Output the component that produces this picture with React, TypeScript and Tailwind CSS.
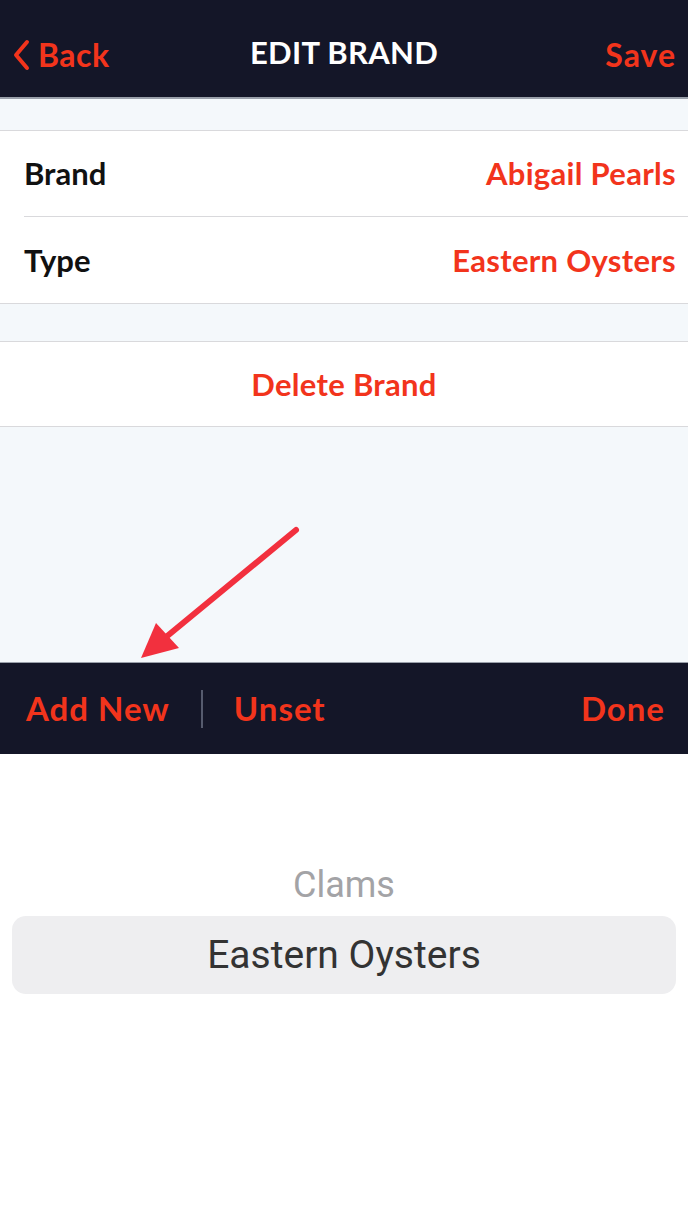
import React from 'react';

const red = 'text-[#f2341c]';

const Row: React.FC<{ label: string; value: string; divider?: boolean }> = ({ label, value, divider }) => (
  <div className="pl-6">
    <div className={`flex h-[86px] items-center justify-between pr-3 ${divider ? 'border-b border-[#d9d9dc]' : ''}`}>
      <span className="text-[31px] font-bold text-[#111]">{label}</span>
      <span className={`text-[31px] font-bold tracking-[0.3px] ${red}`}>{value}</span>
    </div>
  </div>
);

export default function App() {
  return (
    <div className="relative w-[688px] h-[1221px] bg-white overflow-hidden" style={{ fontFamily: 'Lato, "Open Sans", sans-serif' }}>
      {/* nav bar */}
      <header className="grid h-[99px] grid-cols-[1fr_auto_1fr] items-center bg-[#141628] px-3 border-b-2 border-[#9aa0aa]">
        <div className={`flex items-center gap-[6px] pt-3 ${red}`}>
          <svg width="20" height="32" viewBox="0 0 20 32" fill="none" stroke="currentColor" strokeWidth={4} strokeLinecap="round" strokeLinejoin="round">
            <path d="M15 3 L4 16 L15 29" />
          </svg>
          <span className="text-[32px] font-bold tracking-[0.5px]">Back</span>
        </div>
        <h1 className="text-[31px] font-bold tracking-[0.3px] text-white pt-2">EDIT BRAND</h1>
        <span className={`justify-self-end text-[32px] font-bold tracking-[1px] pt-3 ${red}`}>Save</span>
      </header>

      <div className="bg-[#f4f8fb]">
        <div className="h-[31px]" />
        <div className="bg-white border-y border-[#d9d9dc]">
          <Row label="Brand" value="Abigail Pearls" divider />
          <Row label="Type" value="Eastern Oysters" />
        </div>
        <div className="h-[37px]" />
        <div className="flex h-[86px] items-center justify-center bg-white border-y border-[#d9d9dc]">
          <span className={`text-[31px] font-bold tracking-[0.3px] ${red}`}>Delete Brand</span>
        </div>
        <div className="h-[235px]" />
      </div>

      {/* toolbar */}
      <div className="flex h-[92px] items-center bg-[#141628] pl-[26px] pr-[23px] border-t border-[#9aa0aa]">
        <span className={`text-[33px] font-bold tracking-[1px] ${red}`}>Add New</span>
        <span className="mx-[31px] h-[38px] w-[2px] bg-[#565b6e]" />
        <span className={`text-[33px] font-bold tracking-[1px] ${red}`}>Unset</span>
        <span className={`ml-auto text-[33px] font-bold tracking-[1px] ${red}`}>Done</span>
      </div>

      {/* picker */}
      <div className="px-3 pt-[100px]" style={{ fontFamily: 'Roboto, Inter, sans-serif' }}>
        <div className="flex h-[62px] items-center justify-center text-[36px] text-[#a3a3a6]">Clams</div>
        <div className="flex h-[78px] items-center justify-center rounded-[14px] bg-[#eeeef0] text-[39px] text-[#333]">
          Eastern Oysters
        </div>
      </div>

      {/* annotation arrow */}
      <svg className="absolute left-0 top-0 pointer-events-none" width="688" height="1221">
        <line x1="296" y1="530" x2="160" y2="642" stroke="#f2303e" strokeWidth={6} strokeLinecap="round" />
        <polygon points="141,658 156,623 179,648" fill="#f2303e" />
      </svg>
    </div>
  );
}
